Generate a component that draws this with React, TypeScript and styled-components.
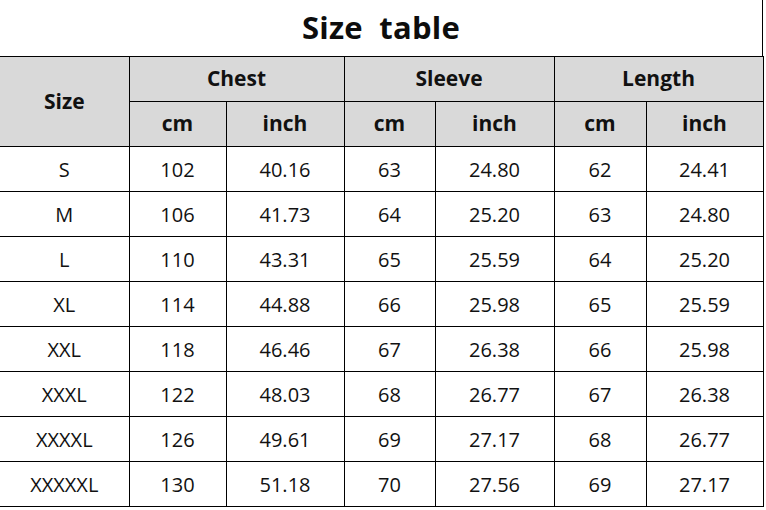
import { createGlobalStyle } from 'styled-components';
import styled from 'styled-components';

const GlobalStyle = createGlobalStyle`
  html, body {
    margin: 0;
    padding: 0;
    background: #ffffff;
  }
  body {
    font-family: "Open Sans", "Noto Sans", "Liberation Sans", sans-serif;
    color: #111111;
  }
`;

const rows: [string, number, string, number, string, number, string][] = [
  ['S', 102, '40.16', 63, '24.80', 62, '24.41'],
  ['M', 106, '41.73', 64, '25.20', 63, '24.80'],
  ['L', 110, '43.31', 65, '25.59', 64, '25.20'],
  ['XL', 114, '44.88', 66, '25.98', 65, '25.59'],
  ['XXL', 118, '46.46', 67, '26.38', 66, '25.98'],
  ['XXXL', 122, '48.03', 68, '26.77', 67, '26.38'],
  ['XXXXL', 126, '49.61', 69, '27.17', 68, '26.77'],
  ['XXXXXL', 130, '51.18', 70, '27.56', 69, '27.17'],
];

const colWidths = [129, 97, 118, 91, 119, 92, 117];

const App = () => (
  <Page>
    <GlobalStyle />
    <Title>Size&nbsp;&nbsp;table</Title>
    <Table>
      <colgroup>
        {colWidths.map((w, i) => (
          <col key={i} style={{ width: w }} />
        ))}
      </colgroup>
      <thead>
        <HeadRow>
          <HeadCell rowSpan={2} $first>Size</HeadCell>
          <HeadCell colSpan={2}>Chest</HeadCell>
          <HeadCell colSpan={2}>Sleeve</HeadCell>
          <HeadCell colSpan={2}>Length</HeadCell>
        </HeadRow>
        <HeadRow>
          <HeadCell>cm</HeadCell>
          <HeadCell>inch</HeadCell>
          <HeadCell>cm</HeadCell>
          <HeadCell>inch</HeadCell>
          <HeadCell>cm</HeadCell>
          <HeadCell>inch</HeadCell>
        </HeadRow>
      </thead>
      <tbody>
        {rows.map((r) => (
          <BodyRow key={r[0]}>
            {r.map((v, i) => (
              <Cell key={i} $first={i === 0}>{v}</Cell>
            ))}
          </BodyRow>
        ))}
      </tbody>
    </Table>
  </Page>
);

export default App;

const Page = styled.div`
  width: 764px;
  display: flex;
  flex-direction: column;
`;

const Title = styled.div`
  height: 56px;
  display: flex;
  align-items: center;
  justify-content: center;
  font-size: 31px;
  font-weight: 700;
  letter-spacing: 0.2px;
  color: #0d0d0d;
  padding-bottom: 2px;
  box-sizing: border-box;
  border-right: 1px solid #000;
  width: 763px;
`;

const Table = styled.table`
  width: 763px;
  table-layout: fixed;
  border-collapse: collapse;
  border-top: 1px solid #000;
`;

const HeadRow = styled.tr`
  height: 45px;
  background: #d9d9d9;
`;

const BodyRow = styled.tr`
  height: 45px;
`;

const HeadCell = styled.th<{ $first?: boolean }>`
  border: 1px solid #000;
  border-left: ${({ $first }) => ($first ? 'none' : '1px solid #000')};
  padding: 0 0 2px;
  font-size: 21px;
  font-weight: 700;
  text-align: center;
  color: #111;
`;

const Cell = styled.td<{ $first?: boolean }>`
  border: 1px solid #000;
  border-left: ${({ $first }) => ($first ? 'none' : '1px solid #000')};
  padding: 0;
  font-size: 20px;
  font-weight: 400;
  text-align: center;
  color: #111;
`;
